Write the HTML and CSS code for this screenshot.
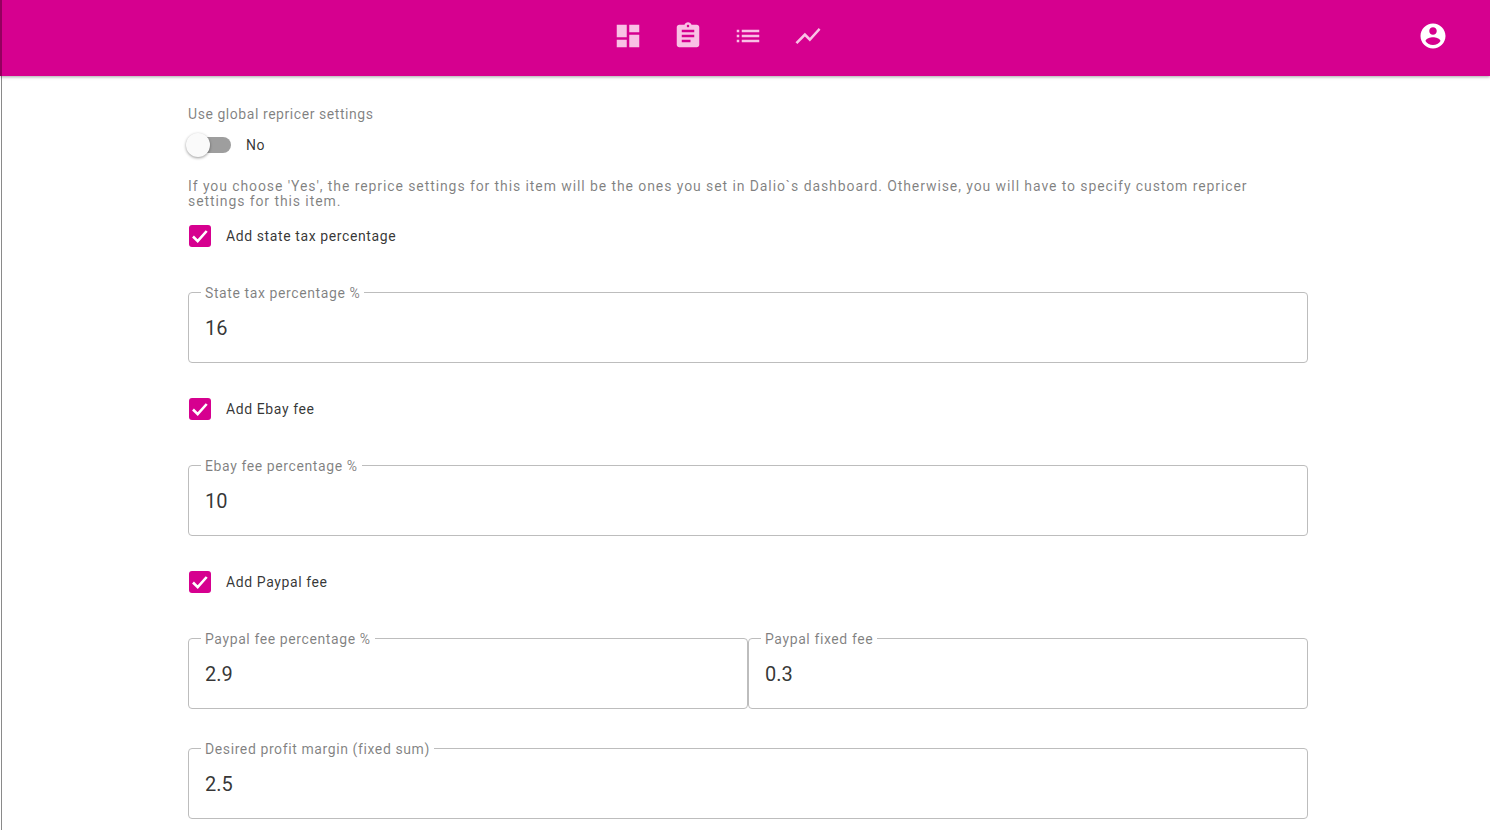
FILE: index.html
```html
<html>
<head>
  <link rel="stylesheet" href="styles.css">
</head>
<body>
<div class="toolbar">
  <div class="nav">
    <svg class="nav-icon" viewBox="0 0 24 24"><path d="M3 13h8V3H3v10zm0 8h8v-6H3v6zm10 0h8V11h-8v10zm0-18v6h8V3h-8z"/></svg>
    <svg class="nav-icon" viewBox="0 0 24 24"><path d="M19 3h-4.18C14.4 1.84 13.3 1 12 1c-1.3 0-2.4.84-2.82 2H5c-1.1 0-2 .9-2 2v14c0 1.1.9 2 2 2h14c1.1 0 2-.9 2-2V5c0-1.1-.9-2-2-2zm-7 0c.55 0 1 .45 1 1s-.45 1-1 1-1-.45-1-1 .45-1 1-1zm2 14H7v-2h7v2zm3-4H7v-2h10v2zm0-4H7V7h10v2z"/></svg>
    <svg class="nav-icon" viewBox="0 0 24 24"><path d="M3 13h2v-2H3v2zm0 4h2v-2H3v2zm0-8h2V7H3v2zm4 4h14v-2H7v2zm0 4h14v-2H7v2zM7 7v2h14V7H7z"/></svg>
    <svg class="nav-icon" viewBox="0 0 24 24"><path d="M3.5 18.49l6-6.01 4 4L22 6.92l-1.41-1.41-7.09 7.97-4-4L2 16.99z"/></svg>
  </div>
  <svg class="account" viewBox="0 0 24 24"><path d="M12 2C6.48 2 2 6.48 2 12s4.48 10 10 10 10-4.48 10-10S17.52 2 12 2zm0 3c1.66 0 3 1.34 3 3s-1.34 3-3 3-3-1.34-3-3 1.34-3 3-3zm0 14.2c-2.5 0-4.71-1.28-6-3.22.03-1.99 4-3.08 6-3.08 1.99 0 5.97 1.09 6 3.08-1.29 1.94-3.5 3.22-6 3.22z"/></svg>
</div>

<div class="content">
  <div class="title">Use global repricer settings</div>
  <div class="toggle-row">
    <div class="toggle"><div class="toggle-knob"></div></div>
    <span>No</span>
  </div>
  <p class="hint">If you choose 'Yes', the reprice settings for this item will be the ones you set in Dalio`s dashboard. Otherwise, you will have to specify custom repricer settings for this item.</p>

  <div class="check-row">
    <div class="checkbox"><svg viewBox="0 0 22 22"><path d="M4 11.5l4.7 4.7 9-10.2"/></svg></div>
    <span>Add state tax percentage</span>
  </div>
  <fieldset class="field">
    <legend>State tax percentage %</legend>
    <div class="value">16</div>
  </fieldset>

  <div class="check-row">
    <div class="checkbox"><svg viewBox="0 0 22 22"><path d="M4 11.5l4.7 4.7 9-10.2"/></svg></div>
    <span>Add Ebay fee</span>
  </div>
  <fieldset class="field">
    <legend>Ebay fee percentage %</legend>
    <div class="value">10</div>
  </fieldset>

  <div class="check-row">
    <div class="checkbox"><svg viewBox="0 0 22 22"><path d="M4 11.5l4.7 4.7 9-10.2"/></svg></div>
    <span>Add Paypal fee</span>
  </div>
  <div class="field-pair">
    <fieldset class="field">
      <legend>Paypal fee percentage %</legend>
      <div class="value">2.9</div>
    </fieldset>
    <fieldset class="field">
      <legend>Paypal fixed fee</legend>
      <div class="value">0.3</div>
    </fieldset>
  </div>

  <fieldset class="field field-last">
    <legend>Desired profit margin (fixed sum)</legend>
    <div class="value">2.5</div>
  </fieldset>
</div>
</body>
</html>
```

FILE: styles.css
```css
html{
    overflow: hidden;
}
body{
    margin: 0;
    height: 830px;
    overflow: hidden;
    background: linear-gradient(to right, white 1px, #8a8a8a 1px, #8a8a8a 2px, white 2px);
    font-family: Roboto, sans-serif;
    font-size: 14px;
    letter-spacing: 0.6px;
    color: rgba(0,0,0,0.8);
}
.toolbar{
    display: flex;
    justify-content: space-between;
    align-items: center;
    height: 72px;
    padding: 0 42px 4px 611px;
    border-left: 2px solid #94005f;
    background: #d6008f;
    box-shadow: 0 1px 3px rgba(0,0,0,0.35);
}
.nav{
    display: flex;
    gap: 30px;
}
.nav-icon{
    width: 30px;
    height: 30px;
    fill: #f9c1e5;
}
.account{
    width: 30px;
    height: 30px;
    fill: white;
}
.content{
    width: 1120px;
    margin-left: 188px;
    padding-top: 29px;
}
.title{
    line-height: 18px;
    letter-spacing: 0.56px;
    color: rgba(0,0,0,0.5);
}
.toggle-row{
    display: flex;
    align-items: center;
    gap: 15px;
    height: 24px;
    margin-top: 10px;
}
.toggle{
    position: relative;
    width: 36px;
    height: 16px;
    margin-left: 7px;
    border-radius: 8px;
    background: #9e9e9e;
}
.toggle-knob{
    position: absolute;
    left: -9px;
    top: -4px;
    width: 24px;
    height: 24px;
    border-radius: 50%;
    background: #fafafa;
    box-shadow: 0 1px 3px rgba(0,0,0,0.4);
}
.hint{
    margin: 22px 40px 0 0;
    line-height: 15px;
    letter-spacing: 0.91px;
    color: rgba(0,0,0,0.5);
}
.check-row{
    display: flex;
    align-items: center;
    gap: 15px;
    height: 22px;
    margin-top: 16px;
    margin-left: 1px;
}
.checkbox{
    width: 22px;
    height: 22px;
    border-radius: 3px;
    background: #d6008f;
}
.checkbox svg{
    display: block;
    fill: none;
    stroke: white;
    stroke-width: 2.6;
}
.field{
    margin: 37px 0 0;
    padding: 0 16px 0 12px;
    min-width: 0;
    height: 79px;
    box-sizing: border-box;
    border: 1px solid #bdbdbd;
    border-radius: 4px;
    color: rgba(0,0,0,0.5);
}
.field legend{
    padding: 2px 4px 0;
    line-height: 14px;
}
.value{
    padding-left: 4px;
    margin-top: 14px;
    font-size: 20px;
    line-height: 28px;
    letter-spacing: 0;
    color: rgba(0,0,0,0.8);
}
.field + .check-row{
    margin-top: 35px;
}
.field-pair{
    display: flex;
    margin-top: 37px;
}
.field-pair .field{
    flex: 1;
    margin-top: 0;
}
.field-pair + .field-last{
    margin-top: 31px;
}
```
